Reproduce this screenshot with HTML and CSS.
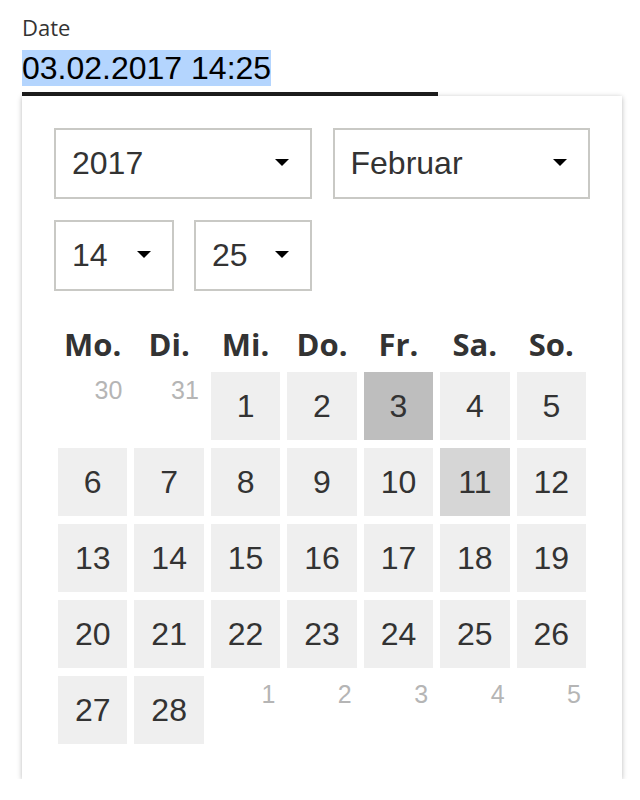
FILE: index.html
```html
<!DOCTYPE html>
<html lang="de">
<head>
<meta charset="utf-8">
<title>Date</title>
<link rel="stylesheet" href="styles.css">
</head>
<body>
<div class="field">
  <div class="label">Date</div>
  <div class="input"><span class="sel">03.02.2017 14:25</span></div>
  <div class="picker">
    <div class="selects">
      <div class="select wide"><span>2017</span><i class="caret"></i></div>
      <div class="select wide"><span>Februar</span><i class="caret"></i></div>
    </div>
    <div class="selects">
      <div class="select hour"><span>14</span><i class="caret"></i></div>
      <div class="select minute"><span>25</span><i class="caret"></i></div>
    </div>
    <div class="weekdays">
      <div>Mo.</div><div>Di.</div><div>Mi.</div><div>Do.</div><div>Fr.</div><div>Sa.</div><div>So.</div>
    </div>
    <div class="days">
      <div class="day other">30</div>
      <div class="day other">31</div>
      <div class="day">1</div>
      <div class="day">2</div>
      <div class="day selected">3</div>
      <div class="day">4</div>
      <div class="day">5</div>
      <div class="day">6</div>
      <div class="day">7</div>
      <div class="day">8</div>
      <div class="day">9</div>
      <div class="day">10</div>
      <div class="day today">11</div>
      <div class="day">12</div>
      <div class="day">13</div>
      <div class="day">14</div>
      <div class="day">15</div>
      <div class="day">16</div>
      <div class="day">17</div>
      <div class="day">18</div>
      <div class="day">19</div>
      <div class="day">20</div>
      <div class="day">21</div>
      <div class="day">22</div>
      <div class="day">23</div>
      <div class="day">24</div>
      <div class="day">25</div>
      <div class="day">26</div>
      <div class="day">27</div>
      <div class="day">28</div>
      <div class="day other">1</div>
      <div class="day other">2</div>
      <div class="day other">3</div>
      <div class="day other">4</div>
      <div class="day other">5</div>
    </div>
  </div>
</div>
</body>
</html>
```

FILE: styles.css
```css
html, body {
  margin: 0;
  padding: 0;
  background: #ffffff;
}

.field {
  padding: 12px 0 0 22px;
  width: 600px;
}

.label {
  font-family: "Open Sans", "Noto Sans", sans-serif;
  font-size: 22px;
  line-height: 30px;
  color: #333333;
}

.input {
  width: 416px;
  margin-top: 8px;
  padding-bottom: 6px;
  border-bottom: 4px solid #1e1e1e;
  font-family: "Liberation Sans", Arial, sans-serif;
  font-size: 32px;
  line-height: 36px;
  color: #000000;
}

.sel {
  background: #b4d5fe;
}

.picker {
  width: 600px;
  box-sizing: border-box;
  padding: 32px 32px 35px 32px;
  background: #ffffff;
  box-shadow: 0 1px 5px rgba(0, 0, 0, 0.28);
}

.selects {
  display: flex;
  gap: 21px;
  margin-bottom: 21px;
}

.selects + .selects {
  gap: 20px;
  margin-bottom: 0;
}

.select {
  box-sizing: border-box;
  height: 71px;
  border: 2px solid #c9c9c5;
  display: flex;
  align-items: center;
  justify-content: space-between;
  padding: 0 21px 0 16px;
  font-family: "Liberation Sans", Arial, sans-serif;
  font-size: 32px;
  color: #333333;
}

.select.wide {
  flex: 1 1 0;
}

.select.hour {
  width: 120px;
}

.select.minute {
  width: 118px;
}

.caret {
  width: 0;
  height: 0;
  border-left: 7px solid transparent;
  border-right: 7px solid transparent;
  border-top: 7px solid #000000;
  margin-top: -2px;
}

.weekdays,
.days {
  display: grid;
  grid-template-columns: repeat(7, 1fr);
  column-gap: 7px;
  margin: 0 4px;
}

.weekdays {
  margin-top: 33px;
  margin-bottom: 8px;
  font-family: "Open Sans", "Noto Sans", sans-serif;
  font-weight: 700;
  font-size: 31px;
  line-height: 40px;
  color: #333333;
  text-align: center;
}

.days {
  row-gap: 8px;
  grid-auto-rows: 68px;
}

.day {
  background: #efefef;
  display: flex;
  align-items: center;
  justify-content: center;
  font-family: "Liberation Sans", Arial, sans-serif;
  font-size: 32px;
  color: #333333;
}

.day.selected {
  background: #bebebe;
}

.day.today {
  background: #d6d6d6;
}

.day.other {
  background: transparent;
  align-items: flex-start;
  justify-content: flex-end;
  padding: 4px 5px 0 0;
  font-size: 25px;
  color: #b5b5b5;
}
```
